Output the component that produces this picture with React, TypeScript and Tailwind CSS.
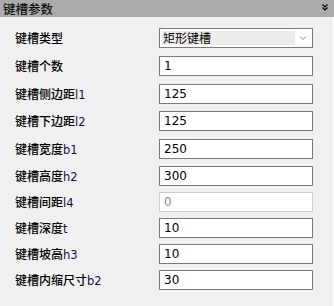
import type { FC } from 'react';

type Row = { label: string; sub?: string; value: string; gap: string; disabled?: boolean };

const rows: Row[] = [
  { label: '键槽个数', value: '1', gap: 'mt-[8px]' },
  { label: '键槽侧边距', sub: 'l1', value: '125', gap: 'mt-[8px]' },
  { label: '键槽下边距', sub: 'l2', value: '125', gap: 'mt-[7px]' },
  { label: '键槽宽度', sub: 'b1', value: '250', gap: 'mt-[8px]' },
  { label: '键槽高度', sub: 'h2', value: '300', gap: 'mt-[7px]' },
  { label: '键槽间距', sub: 'l4', value: '0', gap: 'mt-[6px]', disabled: true },
  { label: '键槽深度', sub: 't', value: '10', gap: 'mt-[6px]' },
  { label: '键槽坡高', sub: 'h3', value: '10', gap: 'mt-[6px]' },
  { label: '键槽内缩尺寸', sub: 'b2', value: '30', gap: 'mt-[6px]' },
];

const cjk = "font-['Noto_Sans_CJK_SC',sans-serif]";
const latin = "font-['DejaVu_Sans','Liberation_Sans',sans-serif]";

const Label: FC<{ text: string; sub?: string }> = ({ text, sub }) => (
  <div className="w-[144px] pl-[15px] text-[12px] leading-[20px] text-black">
    <span className={`${cjk} font-medium`}>{text}</span>
    {sub && <span className={`${latin} text-[11.5px] text-[#101040]`}>{sub}</span>}
  </div>
);

export default function App() {
  return (
    <div className="flex h-[306px] w-[334px] flex-col bg-[#f0f0f0]">
      <header className="flex h-[17px] items-center justify-between bg-[#ababab] pl-[3px] pr-[6px]">
        <span className={`${cjk} font-medium text-[12.5px] leading-[17px] text-[#111]`}>键槽参数</span>
        <svg width="6" height="7" viewBox="0 0 6 7" className="mb-[3px]">
          <path d="M0.5 0.5 L3 3 L5.5 0.5 M0.5 3.5 L3 6 L5.5 3.5" fill="none" stroke="#000" strokeWidth="1.2" />
        </svg>
      </header>
      <div className="flex flex-1 flex-col border-r-2 border-[#f8f8f8] pt-[11px]">
        <div className="flex h-[20px] items-center">
          <Label text="键槽类型" />
          <div className="ml-[15px] flex h-[20px] w-[154px] items-center border border-[#7a7a7a] bg-white p-[2px]">
            <div className={`${cjk} flex h-full flex-1 items-center bg-[#ececec] pl-[1px] text-[12px] leading-none text-black`}>
              矩形键槽
            </div>
            <svg width="14" height="14" viewBox="0 0 14 14" className="ml-[1px]">
              <path d="M4 5.5 L7 8.5 L10 5.5" fill="none" stroke="#888" strokeWidth="1" />
            </svg>
          </div>
        </div>
        {rows.map((r) => (
          <div key={r.label} className={`flex h-[20px] items-center ${r.gap}`}>
            <Label text={r.label} sub={r.sub} />
            <div
              className={`${latin} ml-[15px] flex h-[20px] w-[154px] items-center border bg-white pl-[4px] text-[12px] leading-none ${
                r.disabled ? 'border-[#cccccc] text-[#8a8a8a]' : 'border-[#7a7a7a] text-black'
              }`}
            >
              {r.value}
            </div>
          </div>
        ))}
      </div>
    </div>
  );
}
